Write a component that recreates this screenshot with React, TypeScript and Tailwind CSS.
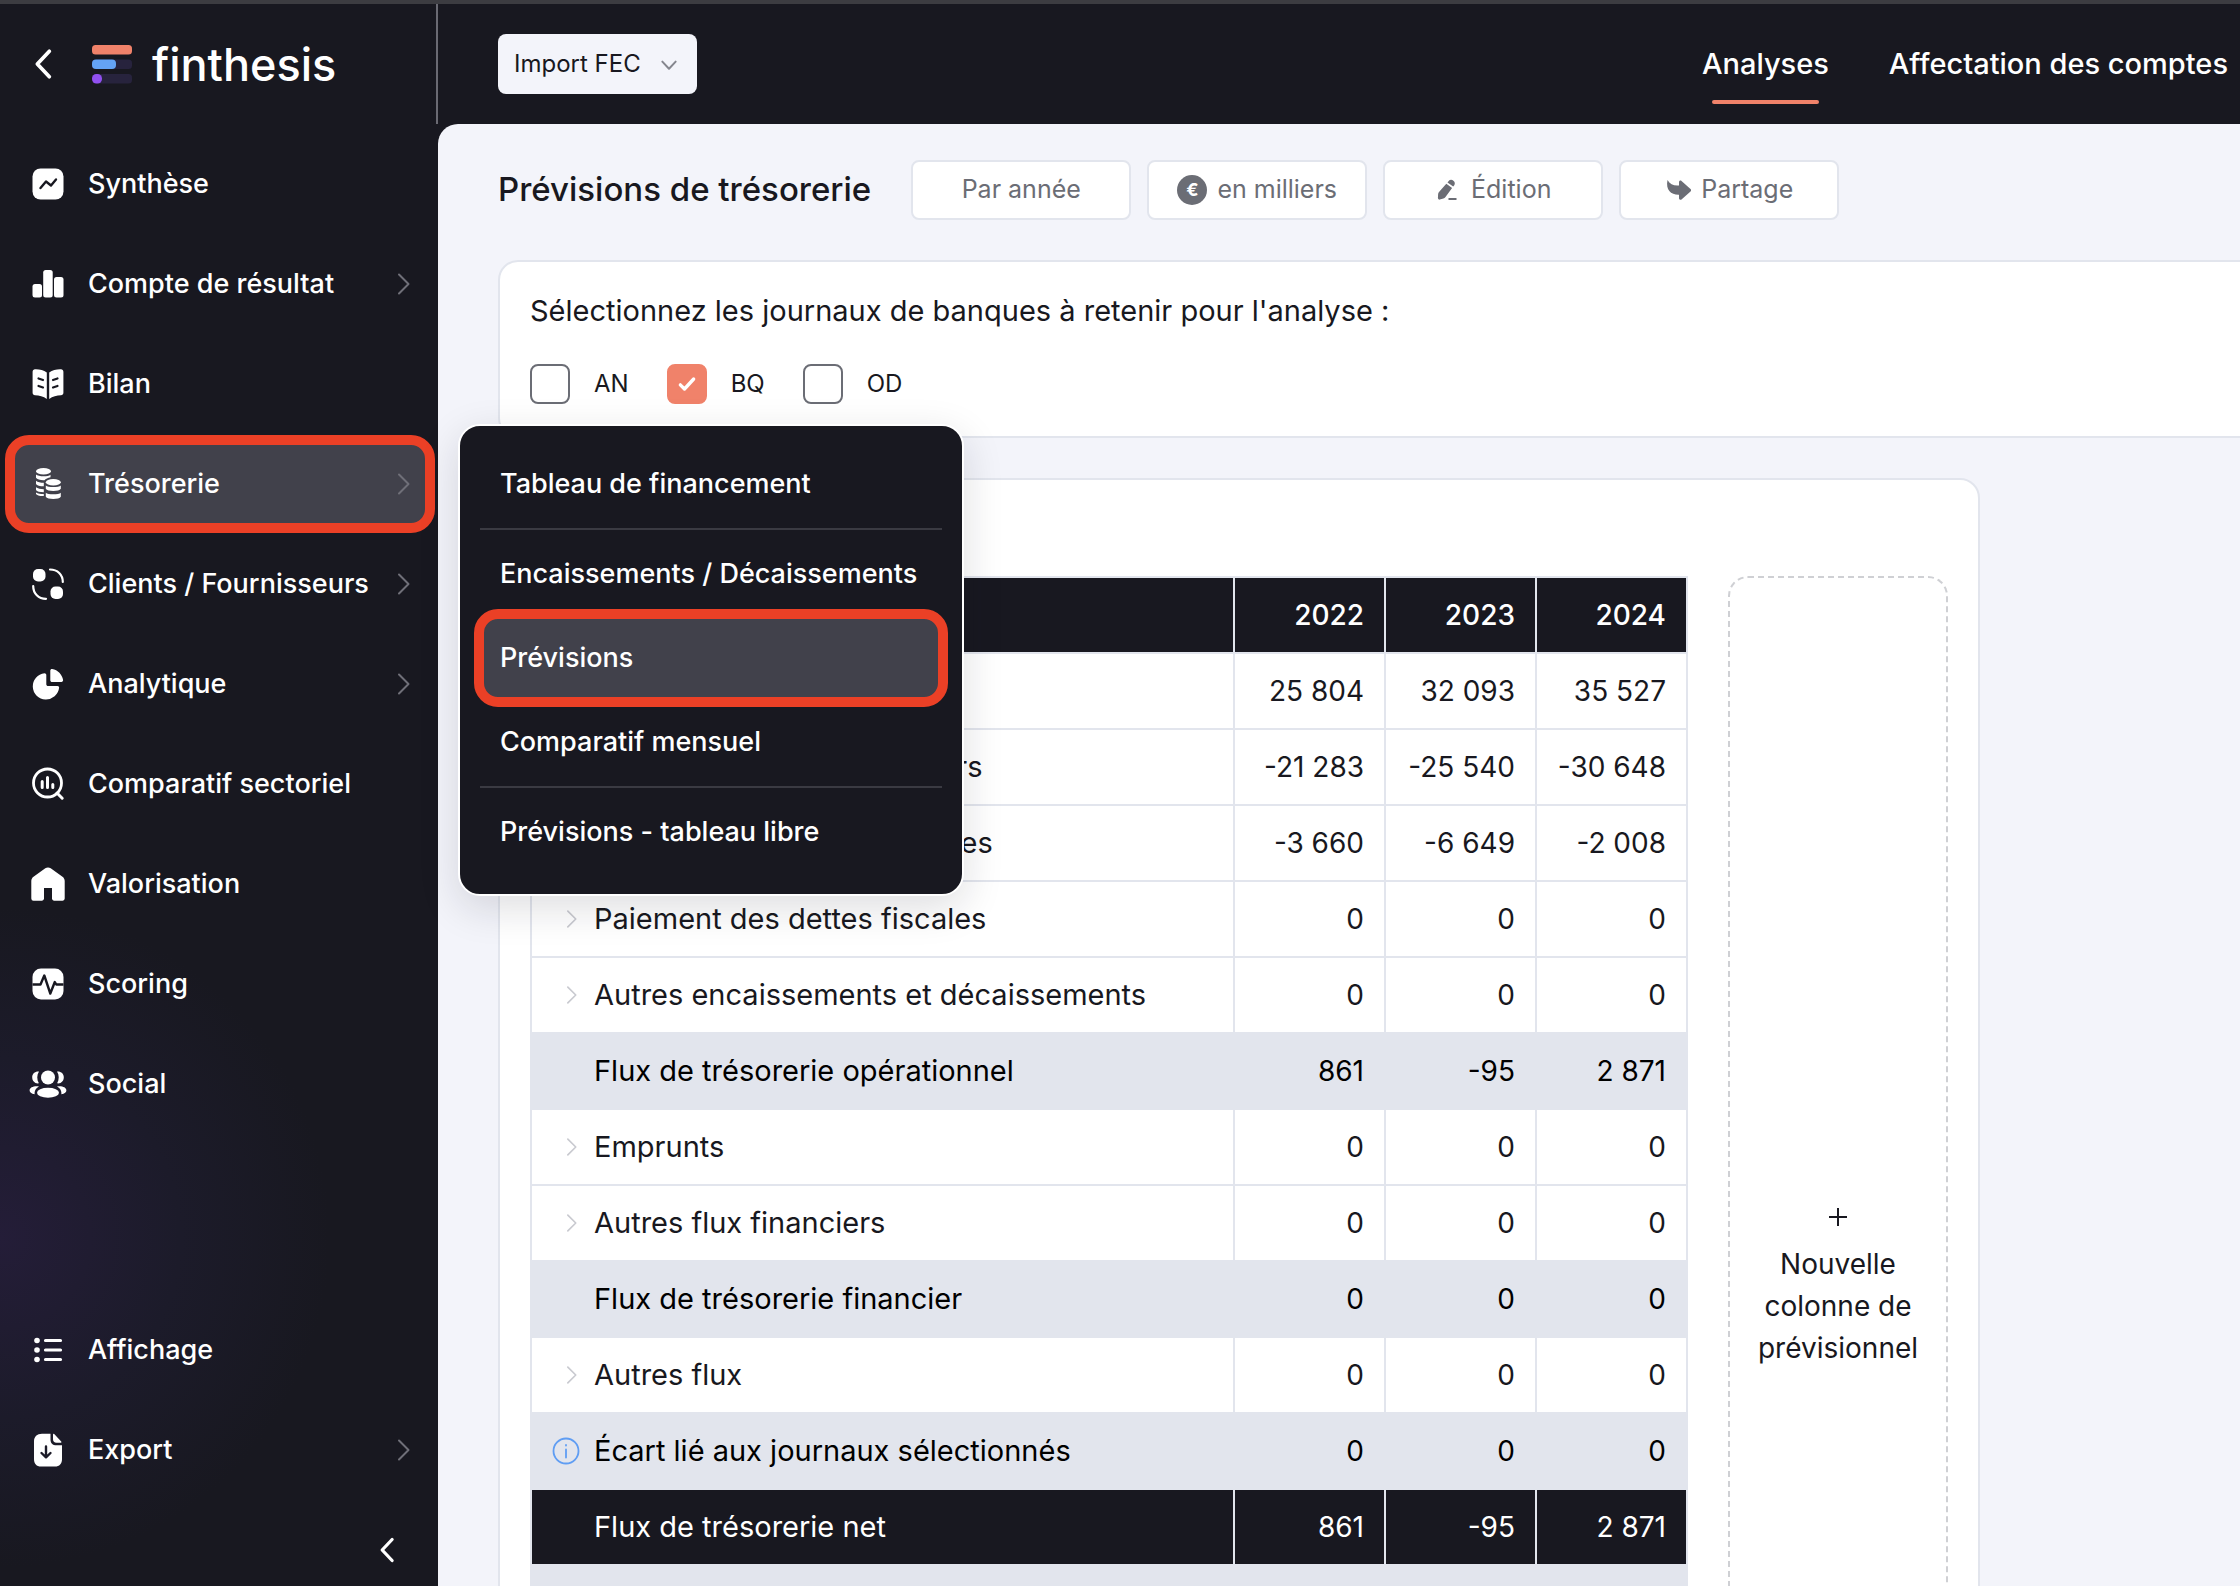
import React, { useState } from 'react';

interface NavItem {
  label: string;
  icon: React.ReactNode;
  hasMenu?: boolean;
}

interface Row {
  label: string;
  values: string[];
  kind?: 'line' | 'subtotal' | 'total';
  info?: boolean;
}

const Svg: React.FC<{ children?: React.ReactNode }> = ({ children }) => (
  <svg viewBox="0 0 40 40" className="h-10 w-10 shrink-0" fill="currentColor" aria-hidden="true">
    {children}
  </svg>
);

const SummaryIcon = () => (
  <Svg>
    <rect x="4.500" y="4.500" width="31" height="31" rx="8" />
    <path d="M12.500 24l5.500-6.500 5 4 5-6" fill="none" stroke="#181820" strokeWidth="2.400" strokeLinecap="round" strokeLinejoin="round" />
  </Svg>
);

const BarsIcon = () => (
  <Svg>
    <rect x="4.500" y="20" width="9.500" height="13.500" rx="2.500" />
    <rect x="15.200" y="6" width="9.500" height="27.500" rx="2.500" />
    <rect x="26" y="13" width="9.500" height="20.500" rx="2.500" />
  </Svg>
);

const BookIcon = () => (
  <Svg>
    <path d="M18.800 8.500C15.500 6 11 5 7 5.200 5.600 5.300 4.600 6.300 4.600 7.700v21c0 1.400 1 2.500 2.400 2.600 4.200.2 8.500 1.200 11.800 3.600z" />
    <path d="M21.200 8.500C24.500 6 29 5 33 5.200c1.400.1 2.400 1.100 2.400 2.500v21c0 1.400-1 2.500-2.400 2.600-4.200.2-8.500 1.200-11.800 3.600z" />
    <path d="M10.500 14.500l4.500 1.500M10.500 22l4.500 1.500M29.500 14.500L25 16M29.500 22L25 23.500" fill="none" stroke="#181820" strokeWidth="2.200" strokeLinecap="round" />
  </Svg>
);

const CoinsIcon = () => (
  <Svg>
    <ellipse cx="15.500" cy="7.300" rx="7.500" ry="3.200" />
    <path d="M8 10.500c2 2.200 12 2.500 14.500.3v2.400c-2.500.6-5 1.500-6 3-3.500.2-7.500-.6-8.500-2.400z" />
    <path d="M8 16.800c1.700 1.500 4.500 2 7.800 2v3.500c-3.800 0-7-.8-7.800-2.300z" />
    <path d="M8 23.300c1.700 1.300 4.500 1.800 7.800 1.900v3c-3.800 0-7-.7-7.800-2.200z" />
    <path d="M8 28.500c1.700 1 4.500 1.500 7.800 1.500v2c-3.800.2-7-.6-7.800-2z" />
    <ellipse cx="25.300" cy="18.200" rx="7.500" ry="3.200" />
    <path d="M17.800 21.400c2 2 13 2 15 0v3.400c-1.500 3-13.500 3-15 0z" />
    <path d="M17.800 28.800c2 2 13 2 15 0v4c-1.500 3-13.500 3-15 0z" />
  </Svg>
);

const PartnersIcon = () => (
  <Svg>
    <rect x="5" y="5" width="12.500" height="12.500" rx="5" />
    <rect x="22.500" y="22.500" width="12.500" height="12.500" rx="5" />
    <path d="M22 5.500C29.500 5.500 34.800 10.500 34.800 18M5.200 22c0 7.500 5.300 12.800 12.800 12.800" fill="none" stroke="currentColor" strokeWidth="2.200" strokeLinecap="round" />
  </Svg>
);

const PieIcon = () => (
  <Svg>
    <path d="M16.500 9.200c1 0 1.800.8 1.800 1.800v9.200c0 1 .8 1.800 1.800 1.800h9.400c1 0 1.800.8 1.600 1.800A13.200 13.200 0 1 1 16.500 9.200z" />
    <path d="M22.300 6.500c0-1 .9-1.700 1.900-1.500 5.600 1 10.100 5.500 10.900 11.100.1 1-.6 1.900-1.600 1.900h-9.400c-1 0-1.800-.8-1.800-1.800z" />
  </Svg>
);

const SectorIcon = () => (
  <Svg>
    <circle cx="19.500" cy="19" r="14" fill="none" stroke="currentColor" strokeWidth="2.800" />
    <path d="M29 29l5.200 5.200M14.200 17.500v6M19.500 13.500v10M24.800 20.500v3" fill="none" stroke="currentColor" strokeWidth="3" strokeLinecap="round" />
  </Svg>
);

const HouseIcon = () => (
  <Svg>
    <path d="M17.300 4.300c1.600-1.200 3.800-1.200 5.400 0l11.800 8.500c1.400 1 2.200 2.600 2.200 4.300v17.400c0 1.200-1 2.200-2.200 2.200h-8.300c-1.200 0-2.200-1-2.200-2.200V24h-8v10.500c0 1.200-1 2.200-2.200 2.200H5.500a2.200 2.200 0 0 1-2.200-2.200V17.100c0-1.700.8-3.300 2.200-4.300z" />
  </Svg>
);

const PulseIcon = () => (
  <Svg>
    <rect x="4.500" y="4.500" width="31" height="31" rx="8.500" />
    <path d="M4.500 20.500h8l3.800-9 6 18 4.500-11.500 1.500 2.500h7.200" fill="none" stroke="#181820" strokeWidth="2.400" strokeLinejoin="round" />
  </Svg>
);

const PeopleIcon = () => (
  <Svg>
    <circle cx="20" cy="13.500" r="7" />
    <ellipse cx="20" cy="28.800" rx="11" ry="5" />
    <path d="M11 7.600c-3.800-.4-6.800 2-6.800 5.700 0 3.900 2.800 6.600 6.700 6-2.200-3.500-2.200-8.200.1-11.700zM29 7.600c3.800-.4 6.800 2 6.800 5.700 0 3.900-2.800 6.600-6.700 6 2.200-3.500 2.200-8.200-.1-11.700z" />
    <path d="M11 22.400c-5-.8-9.400 1-9.400 3.800 0 2 1.700 3.500 5 4-.3-3.300 1-6 4.400-7.800zM29 22.400c5-.8 9.400 1 9.400 3.800 0 2-1.700 3.500-5 4 .3-3.300-1-6-4.400-7.800z" />
  </Svg>
);

const ListIcon = () => (
  <Svg>
    <circle cx="9" cy="10.500" r="2.800" />
    <circle cx="9" cy="20" r="2.800" />
    <circle cx="9" cy="29.500" r="2.800" />
    <path d="M17.500 10.500h15M17.500 20h15M17.500 29.500h15" stroke="currentColor" strokeWidth="3.200" strokeLinecap="round" />
  </Svg>
);

const ExportIcon = () => (
  <Svg>
    <path d="M14 3.700h8.500v5.500c0 4.200 2 6 6 6H34v14c0 4.500-2.500 7.300-7 7.300H13c-4.500 0-7-2.800-7-7.300V11.500c0-5 3-7.800 8-7.800z" />
    <path d="M25 4.500c0-.6.700-.9 1.200-.5l7 7.500c.5.500.2 1.300-.5 1.300H28.500c-2.200 0-3.500-1.300-3.500-3.500z" />
    <path d="M18 16.500v10.500M13.500 23l4.500 4.300 4.500-4.300" fill="none" stroke="#1c1b28" strokeWidth="2.400" strokeLinecap="round" strokeLinejoin="round" />
  </Svg>
);

const Chevron: React.FC<{ className: string; path?: string; width?: string }> = ({ className, path = 'M7 2.500l9.500 9.500L7 21.500', width = '2' }) => (
  <svg viewBox="0 0 24 24" className={className} fill="none" stroke="currentColor" strokeWidth={width} strokeLinecap="round" strokeLinejoin="round" aria-hidden="true">
    <path d={path} />
  </svg>
);

const Logo = () => (
  <svg viewBox="0 0 40 40" className="h-10 w-10" aria-hidden="true">
    <rect x="0" y="1" width="40" height="9.500" rx="3.500" fill="#f0826a" />
    <rect x="0" y="15.500" width="40" height="9.500" rx="3.500" fill="#27233d" />
    <rect x="0" y="15.500" width="24" height="9.500" rx="4" fill="#64a3f5" />
    <rect x="0" y="30" width="40" height="9.500" rx="3.500" fill="#27233d" />
    <rect x="0" y="30" width="10" height="9.500" rx="4.500" fill="#9150f0" />
  </svg>
);

const mainNav: NavItem[] = [
  { label: 'Synthèse', icon: <SummaryIcon /> },
  { label: 'Compte de résultat', icon: <BarsIcon />, hasMenu: true },
  { label: 'Bilan', icon: <BookIcon /> },
  { label: 'Trésorerie', icon: <CoinsIcon />, hasMenu: true },
  { label: 'Clients / Fournisseurs', icon: <PartnersIcon />, hasMenu: true },
  { label: 'Analytique', icon: <PieIcon />, hasMenu: true },
  { label: 'Comparatif sectoriel', icon: <SectorIcon /> },
  { label: 'Valorisation', icon: <HouseIcon /> },
  { label: 'Scoring', icon: <PulseIcon /> },
  { label: 'Social', icon: <PeopleIcon /> },
];

const footerNav: NavItem[] = [
  { label: 'Affichage', icon: <ListIcon /> },
  { label: 'Export', icon: <ExportIcon />, hasMenu: true },
];

const menuGroups = [
  ['Tableau de financement'],
  ['Encaissements / Décaissements', 'Prévisions', 'Comparatif mensuel'],
  ['Prévisions - tableau libre'],
];

const years = ['2022', '2023', '2024'];

const rows: Row[] = [
  { label: 'Encaissements clients', values: ['25 804', '32 093', '35 527'] },
  { label: 'Décaissements fournisseurs', values: ['-21 283', '-25 540', '-30 648'] },
  { label: 'Paiement des dettes sociales', values: ['-3 660', '-6 649', '-2 008'] },
  { label: 'Paiement des dettes fiscales', values: ['0', '0', '0'] },
  { label: 'Autres encaissements et décaissements', values: ['0', '0', '0'] },
  { label: 'Flux de trésorerie opérationnel', values: ['861', '-95', '2 871'], kind: 'subtotal' },
  { label: 'Emprunts', values: ['0', '0', '0'] },
  { label: 'Autres flux financiers', values: ['0', '0', '0'] },
  { label: 'Flux de trésorerie financier', values: ['0', '0', '0'], kind: 'subtotal' },
  { label: 'Autres flux', values: ['0', '0', '0'] },
  { label: 'Écart lié aux journaux sélectionnés', values: ['0', '0', '0'], kind: 'subtotal', info: true },
  { label: 'Flux de trésorerie net', values: ['861', '-95', '2 871'], kind: 'total' },
  { label: '', values: ['', '', ''], kind: 'subtotal' },
];

const rowStyles = {
  line: 'bg-white text-[#181820]',
  subtotal: 'bg-[#e2e5ed] text-black',
  total: 'bg-[#181820] text-white',
};

// Red frame around the current entry
const Highlight: React.FC<{ className: string }> = ({ className }) => (
  <span className={`absolute rounded-3xl border-10 border-[#eb4026] bg-[#41414b] ${className}`}></span>
);

const SidebarItem: React.FC<{ item: NavItem; active?: boolean }> = ({ item, active }) => (
  <li>
    <button type="button" className="relative flex h-[100px] w-full items-center text-left text-[27px] font-medium text-white">
      {active && <Highlight className="inset-y-px right-[3px] left-[5px]" />}
      <span className="relative flex flex-1 items-center gap-5 pr-[22px] pl-7">
        {item.icon}
        <span className="flex-1 whitespace-nowrap">{item.label}</span>
        {item.hasMenu && <Chevron className="h-6 w-6 text-[#6f6f78]" />}
      </span>
    </button>
  </li>
);

const Sidebar = () => (
  <aside className="flex w-[438px] shrink-0 flex-col bg-[#181820] bg-[radial-gradient(circle_at_0_78%,#241d38,#1c1b2a_180px,#181820_330px)]">
    <div className="flex h-[120px] shrink-0 items-center border-r-2 border-[#6a6a73] pl-7">
      <button type="button" aria-label="Retour" className="text-white">
        <Chevron className="h-8 w-8" path="M16 2.500L7 12l9 9.500" width="2.800" />
      </button>
      <a href="#" className="ml-8 flex items-center gap-5 text-[45px] leading-none font-medium text-white">
        <Logo />
        finthesis
      </a>
    </div>
    <nav className="flex flex-1 flex-col pt-[10px]">
      <ul>
        {mainNav.map((item) => (
          <SidebarItem key={item.label} item={item} active={item.label === 'Trésorerie'} />
        ))}
      </ul>
      <ul className="mt-auto">
        {footerNav.map((item) => (
          <SidebarItem key={item.label} item={item} />
        ))}
      </ul>
      <button type="button" aria-label="Réduire le menu" className="flex h-[86px] items-start justify-end pt-9 pr-9 text-white">
        <Chevron className="h-7 w-7" path="M15.500 3L7 12l8.500 9" width="2.800" />
      </button>
    </nav>
  </aside>
);

const TreasuryMenu = () => (
  <div className="absolute top-[420px] left-[458px] z-10 w-[506px] divide-y-2 divide-[#3a3a42] rounded-[22px] border-2 border-white bg-[#181820] px-5 pt-4 pb-5 shadow-[0_12px_40px_rgba(24,24,32,0.14)]">
    {menuGroups.map((group) => (
      <ul key={group[0]} className="py-[2px] first:pt-0 last:pb-0">
        {group.map((label) => (
          <li key={label}>
            <a href="#" className="relative flex h-[84px] items-center px-5 text-[27px] font-medium text-white">
              {label === 'Prévisions' && <Highlight className="-inset-x-[6px] -inset-y-[7px]" />}
              <span className="relative whitespace-nowrap">{label}</span>
            </a>
          </li>
        ))}
      </ul>
    ))}
  </div>
);

const Header = () => (
  <header className="flex h-[120px] shrink-0 items-center justify-between bg-[#181820] pr-3 pl-[60px]">
    <div className="relative">
      <select aria-label="Source" className="h-[60px] w-[199px] appearance-none rounded-lg bg-[#f3f4fa] pl-4 text-2xl text-[#181820]">
        <option>Import FEC</option>
      </select>
      <Chevron className="pointer-events-none absolute top-[21px] right-[18px] h-5 w-5 text-[#85868e]" path="M4 8l8 8.500L20 8" width="2.400" />
    </div>
    <nav className="flex gap-[60px] text-[29px] font-medium text-white">
      <a href="#" className="relative">
        Analyses
        <span className="absolute inset-x-[10px] -bottom-[18px] h-1 rounded-full bg-[#f0826a]"></span>
      </a>
      <a href="#">Affectation des comptes</a>
    </nav>
  </header>
);

const ToolbarButton: React.FC<{ children: React.ReactNode }> = ({ children }) => (
  <button type="button" className="flex h-[60px] w-[220px] items-center justify-center rounded-lg border-2 border-[#e2e5ed] bg-white text-[25px] text-[#6b6d75]">
    {children}
  </button>
);

const Toolbar = () => (
  <div className="flex items-center gap-4">
    <h1 className="mr-6 text-[33px] font-medium whitespace-nowrap text-[#181820]">Prévisions de trésorerie</h1>
    <ToolbarButton>Par année</ToolbarButton>
    <ToolbarButton>
      <span className="mr-[10px] flex h-[30px] w-[30px] items-center justify-center rounded-full bg-[#6b6d75] text-lg font-bold text-white">€</span>
      en milliers
    </ToolbarButton>
    <ToolbarButton>
      <svg viewBox="0 0 24 24" className="mr-3 h-6 w-6" fill="currentColor" aria-hidden="true">
        <path d="M13.500 3.200c1.300-1.600 3.300-1.800 4.900-.5 1.600 1.300 1.900 3.200.7 4.800l-.9 1.100-5.700-4.200z" />
        <path d="M11.300 5.800l5.800 4.300-6.600 9c-.6.700-1.300 1.200-2.100 1.500l-3.600 1c-1 .2-1.900-.5-1.900-1.500l.2-3.800c0-.8.400-1.600.9-2.300zM13.500 20h8v2h-8z" />
      </svg>
      Édition
    </ToolbarButton>
    <ToolbarButton>
      <svg viewBox="0 0 28 24" className="mr-2 h-6 w-7" fill="currentColor" aria-hidden="true">
        <path d="M2.500 2c2.500 4.500 6.500 6 11.500 5.500V4c0-1.300 1.500-2 2.500-1.100l9 8c.8.700.8 1.800 0 2.500l-9 8c-1 .9-2.500.2-2.500-1.100v-3.500C6 17 .5 12 2.500 2z" />
      </svg>
      Partage
    </ToolbarButton>
  </div>
);

const JournalPicker = () => {
  const [journals, setJournals] = useState<Record<string, boolean>>({ AN: false, BQ: true, OD: false });

  return (
    <section className="mt-10 -mr-10 rounded-[20px] border-2 border-[#e2e5ed] bg-white px-[30px] pt-7 pb-8">
      <p className="text-[29px] leading-[42px] text-[#181820]">Sélectionnez les journaux de banques à retenir pour l'analyse :</p>
      <div className="mt-8 flex gap-[38px]">
        {Object.keys(journals).map((name) => (
          <label key={name} className="flex items-center gap-6 text-2xl text-[#181820]">
            <span className="relative flex h-10 w-10">
              <input
                type="checkbox"
                checked={journals[name]}
                onChange={() => setJournals({ ...journals, [name]: !journals[name] })}
                className="h-10 w-10 appearance-none rounded-lg border-2 border-[#6b6d75] bg-white checked:border-[#f0826a] checked:bg-[#f0826a]"
              />
              {journals[name] && (
                <Chevron className="pointer-events-none absolute inset-[10px] h-5 w-5 text-white" path="M4 13l5 5L20 6" width="4" />
              )}
            </span>
            {name}
          </label>
        ))}
      </div>
    </section>
  );
};

const ForecastTable = () => (
  <section className="mt-10 flex w-fit items-start gap-10 rounded-[20px] border-2 border-[#e2e5ed] bg-white px-[30px] pt-24">
    <table className="border-collapse text-[28px] text-[#181820]">
      <thead>
        <tr className="h-[76px] bg-[#181820] text-white">
          <th className="w-[703px] border-2 border-[#e2e5ed]"></th>
          {years.map((year) => (
            <th key={year} className="w-[151px] border-2 border-[#e2e5ed] pr-5 text-right font-medium">{year}</th>
          ))}
        </tr>
      </thead>
      <tbody>
        {rows.map((row, i) => (
          <tr key={i} className={`h-[76px] ${rowStyles[row.kind ?? 'line']}`}>
            <td className="border-2 border-[#e2e5ed] pl-[18px]">
              <span className="flex items-center gap-3 text-[29px]">
                <span className="flex w-8 justify-center">
                  {!row.kind && <Chevron className="ml-3 h-6 w-6 text-[#c9cad0]" />}
                  {row.info && (
                    <svg viewBox="0 0 28 28" className="h-7 w-7 text-[#5f9df3]" fill="none" stroke="currentColor" strokeWidth="1.800" strokeLinecap="round" aria-hidden="true">
                      <circle cx="14" cy="14" r="12.500" />
                      <path d="M14 12.500v8M14 8v.5" />
                    </svg>
                  )}
                </span>
                {row.label}
              </span>
            </td>
            {row.values.map((value, j) => (
              <td key={j} className="border-2 border-[#e2e5ed] pr-5 text-right whitespace-nowrap">{value}</td>
            ))}
          </tr>
        ))}
      </tbody>
    </table>
    <button type="button" className="flex h-[1416px] w-[220px] flex-col items-center justify-center rounded-[20px] border-2 border-dashed border-[#cfd0d4] text-[28px] leading-[42px] text-[#181820]">
      <svg viewBox="0 0 20 20" className="mt-2 mb-4 h-5 w-5" stroke="currentColor" strokeWidth="2" aria-hidden="true">
        <path d="M10 1v18M1 10h18" />
      </svg>
      Nouvelle colonne de prévisionnel
    </button>
  </section>
);

const App = () => {
  return (
    <div className="relative flex h-screen flex-col overflow-hidden border-t-4 border-[#3c3c41] bg-[#181820] font-['Inter','Liberation_Sans',sans-serif]">
      <div className="flex min-h-0 flex-1">
        <Sidebar />
        <div className="flex min-w-0 flex-1 flex-col">
          <Header />
          <main className="min-h-0 flex-1 overflow-hidden rounded-tl-[20px] bg-[#f3f4fa] pt-9 pr-5 pl-[60px]">
            <Toolbar />
            <JournalPicker />
            <ForecastTable />
          </main>
        </div>
      </div>
      <TreasuryMenu />
    </div>
  );
};

export default App;
